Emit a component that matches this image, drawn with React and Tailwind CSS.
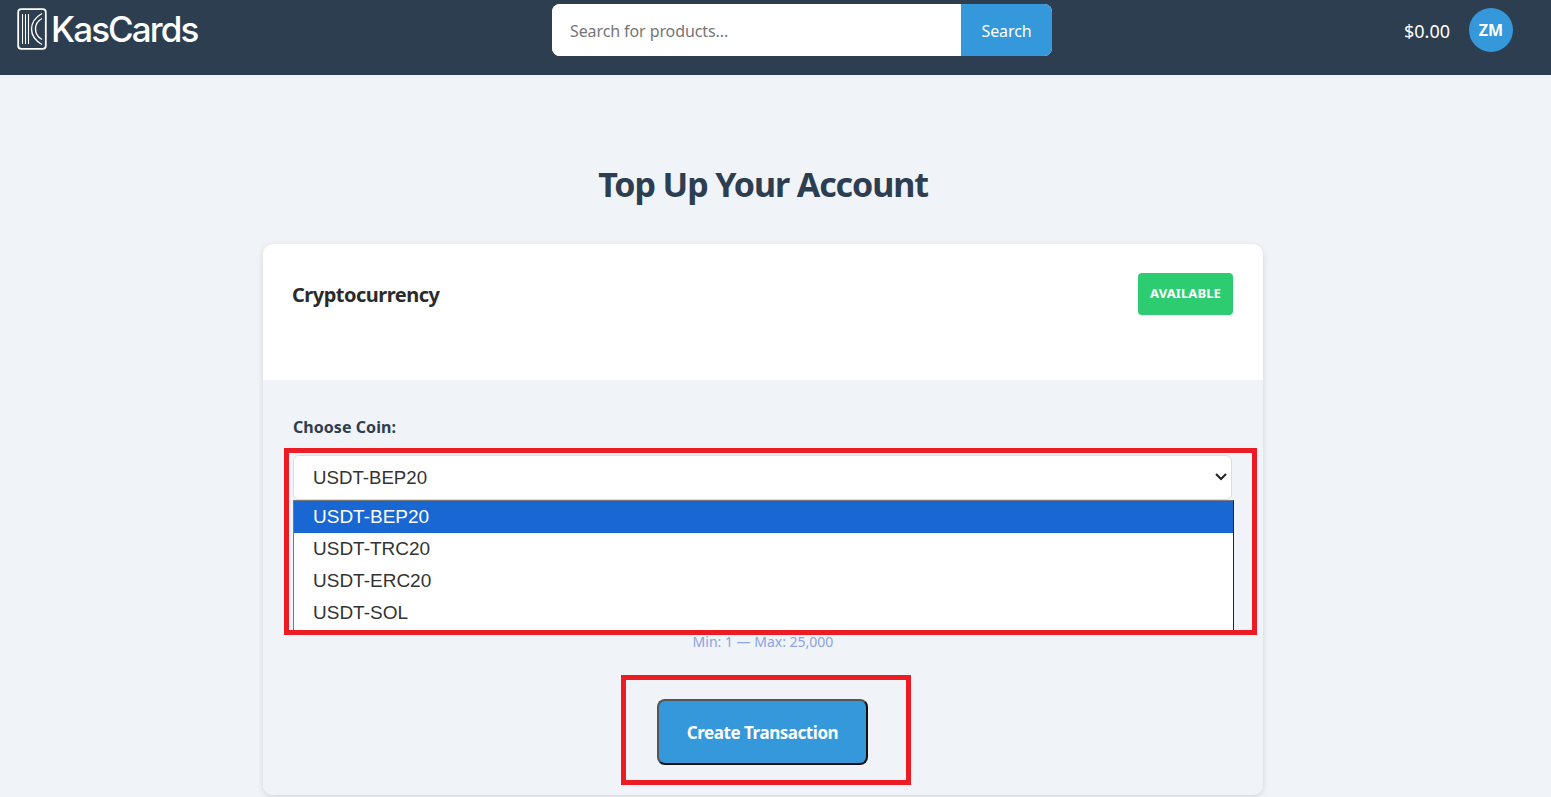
const COINS = ['USDT-BEP20', 'USDT-TRC20', 'USDT-ERC20', 'USDT-SOL']

function LogoMark() {
  return (
    <svg width="30" height="42" viewBox="0 0 30 42" fill="none" stroke="#fff" className="shrink-0">
      <rect x="1.200" y="1.200" width="27.600" height="39.600" rx="3" strokeWidth="1.800" />
      <path d="M5.500 6v30M8.500 6v30M11.500 6v30" strokeWidth="1.100" />
      <path d="M25 5.500C18 9.500 14.500 15 14.500 21S18 32.500 25 36.500M25 10.500C20.500 13 18.500 17 18.500 21S20.500 29 25 31.500" strokeWidth="1.400" />
    </svg>
  )
}

function Header() {
  return (
    <header className="flex h-[75px] items-start bg-[#2c3e50] font-['Noto_Sans',sans-serif]">
      <div className="ml-[17px] mt-[8px] flex w-[535px] items-center gap-[4px]">
        <LogoMark />
        <span className="font-['Inter',sans-serif] text-[35px] font-medium leading-[42px] tracking-[-1.9px] text-white">KasCards</span>
      </div>
      <form className="mt-[4px] flex h-[52px] w-[500px] overflow-hidden rounded-lg bg-white">
        <input
          className="min-w-0 flex-1 bg-white pl-[18px] pt-[2px] text-[16px] tracking-[-0.1px] text-[#333] outline-none placeholder:text-[#757575]"
          placeholder="Search for products..."
        />
        <button type="button" className="w-[91px] bg-[#3498db] pt-[2px] text-[16px] tracking-[-0.1px] text-white">Search</button>
      </form>
      <div className="ml-[352px] mt-[8px] flex h-[44px] items-center gap-[19px]">
        <span className="pt-[2px] text-[18px] text-white">$0.00</span>
        <span className="flex h-[44px] w-[44px] items-center justify-center rounded-full bg-[#3498db] text-[16px] font-bold text-white">ZM</span>
      </div>
    </header>
  )
}

function CoinPicker() {
  return (
    <div className="relative mt-[16px]">
      <select
        defaultValue="USDT-BEP20"
        className="block h-[45px] w-[939px] appearance-none rounded-md border border-[#ddd] bg-white pl-[19px] font-['Liberation_Sans',sans-serif] text-[18.67px] text-[#333] outline-none"
      >
        {COINS.map((coin) => <option key={coin}>{coin}</option>)}
      </select>
      <svg width="12" height="8" viewBox="0 0 12 8" fill="none" stroke="#222" strokeWidth="2" className="pointer-events-none absolute left-[922px] top-[18px]">
        <path d="M1 1l5 5 5-5" />
      </svg>
      {/* open native list */}
      <ul className="absolute left-0 top-[45px] w-[941px] border border-[#777] border-r-[#222] bg-white pb-[3px] font-['Liberation_Sans',sans-serif] text-[19px] leading-[32px] text-[#333]">
        {COINS.map((coin, index) => (
          <li key={coin} className={index === 0 ? 'bg-[#1967d2] pl-[19px] text-white' : 'pl-[19px]'}>{coin}</li>
        ))}
      </ul>
    </div>
  )
}

function TopUpCard() {
  return (
    <section className="mx-auto mt-[37px] w-[1000px] overflow-hidden rounded-[10px] bg-white shadow-[0_2px_6px_rgba(0,0,0,0.12)]">
      <div className="flex h-[136px] items-start justify-between pl-[29px] pr-[30px] pt-[29px]">
        <h2 className="mt-[7px] text-[20px] font-bold leading-[30px] tracking-[-0.5px] text-[#2b2b2b]">Cryptocurrency</h2>
        <span className="flex h-[42px] w-[95px] items-center justify-center rounded-[4px] bg-[#2ecc71] text-[13px] font-bold tracking-[0.1px] text-white">AVAILABLE</span>
      </div>
      <div className="flex h-[415px] flex-col bg-[#f0f3f8] px-[30px] pt-[35px]">
        <label className="text-[16px] font-bold leading-[24px] tracking-[0.05px] text-[#2c3e50]">Choose Coin:</label>
        <CoinPicker />
        <p className="mt-[133px] text-center text-[14px] leading-[18px] text-[#8aa4e4]">Min: 1 — Max: 25,000</p>
        <button
          type="button"
          className="ml-[364px] mt-[48px] h-[66px] w-[211px] rounded-lg border-2 border-t-[#555] border-l-[#555] border-r-[#111] border-b-[#111] bg-[#3498db] pt-[2px] text-[17px] font-bold tracking-[-0.45px] text-white"
        >
          Create Transaction
        </button>
      </div>
    </section>
  )
}

export default function App() {
  return (
    <div className="relative h-[797px] overflow-hidden bg-[#f0f4f8] font-['Noto_Sans',sans-serif]">
      <Header />
      <main className="w-[1526px] pt-[86px]">
        <h1 className="text-center text-[34px] font-bold leading-[46px] tracking-[-1.1px] text-[#2c3e50]">Top Up Your Account</h1>
        <TopUpCard />
      </main>
      {/* red annotation boxes drawn over the screenshot */}
      <div className="absolute left-[284px] top-[448px] h-[187px] w-[973px] border-[5px] border-[#ed1c24]" />
      <div className="absolute left-[621px] top-[675px] h-[110px] w-[290px] border-[5px] border-[#ed1c24]" />
    </div>
  )
}
